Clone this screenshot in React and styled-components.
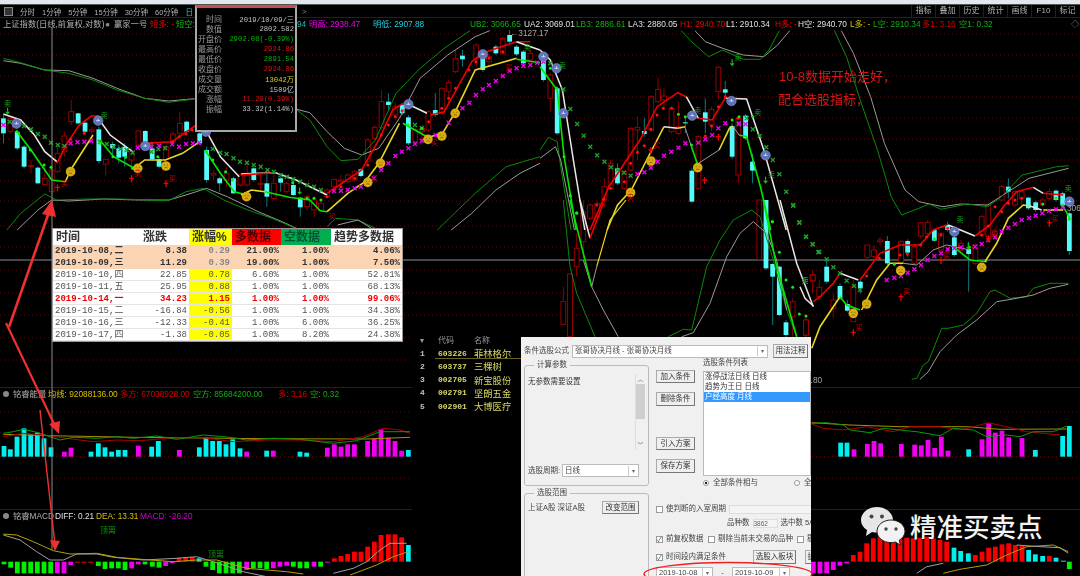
import React from 'react';
import styled, { createGlobalStyle } from 'styled-components';

const GlobalStyle = createGlobalStyle`
  html, body { margin: 0; padding: 0; background: #000; }
  body { font-family: "Liberation Sans", "Noto Sans CJK SC", sans-serif; }
`;

const CJK = `"Liberation Sans", "Noto Sans CJK SC", sans-serif`;
const MONO = `"Liberation Mono", "Noto Sans CJK SC", monospace`;

// zoom frames: the points below were read off crops of the chart
const Z1 = { ox: 0, oy: 0, sx: 2.904 };
const Z2 = { ox: 540, oy: 0, sx: 2.904 };
const Z5 = { ox: 0, oy: 380, sx: 3 };
const Z6 = { ox: 800, oy: 230, sx: 3 };
const Z8 = { ox: 520, oy: 200, sx: 3 };
const Z9 = { ox: 800, oy: 150, sx: 3 };

const at = (z, x, y) => [z.ox + x / z.sx, z.oy + y / 3];
const coords = (z, s) => s.trim().split(/\s+/).map(p => {
  const [x, y] = p.split(',').map(Number);
  return at(z, x, y);
});
const poly = (z, s) => coords(z, s).map(p => p.map(n => n.toFixed(1)).join(',')).join(' ');

const WHITE = '#e8e8e8', GRAY = '#9a9a9a', DGREEN = '#0a8a0a', RED = '#f00000', LIME = '#00e800', YEL = '#e8d820';

const LINES = [
  [Z1, GRAY, 1, '10,182 60,190 130,210 200,212 270,235 340,265 420,295 490,303 565,296'],
  [Z1, DGREEN, 1, '10,175 60,188 130,210 200,220 270,240 340,270 420,295 490,307 565,297'],
  [Z1, GRAY, 1, '862,328 900,338 950,395 1000,445 1050,465 1100,445 1160,355 1220,235 1300,165 1380,110 1422,92'],
  [Z1, DGREEN, 1, '862,330 900,360 950,440 990,482 1040,478 1090,420 1150,280 1220,205 1290,145 1365,92'],
  [Z2, GRAY, 1, '450,92 480,125 530,145 590,165 650,170 690,135 725,92'],
  [Z2, DGREEN, 1, '410,92 440,125 490,170 530,150 590,178 640,178 665,150 695,92'],
  [Z2, GRAY, 1, '875,92 910,160 960,290 1000,430 1060,570 1100,605 1170,620 1220,612 1300,615 1360,575 1420,535 1535,505'],
  [Z2, DGREEN, 1, '855,92 890,170 930,300 980,450 1020,590 1050,645 1100,625 1130,612 1165,628 1240,612 1300,620 1340,590 1400,525 1500,500 1535,497'],
  [Z1, GRAY, 1, '50,690 110,630 150,600 200,603 300,597 400,600 490,600 540,585 600,565 660,590 750,635 830,670 870,690'],
  [Z1, DGREEN, 1, '20,690 60,640 130,582 165,600 250,597 350,597 490,602 540,575 590,565 650,600 720,630 790,655 870,690'],
  [Z1, DGREEN, 1, '950,680 975,655 1040,660 1090,685'],
  [Z1, GRAY, 1, '980,675 1040,660 1090,692'],
  [Z1, DGREEN, 1, '1270,690 1320,640 1380,580 1470,500 1568,470'],
  [Z1, GRAY, 1, '1310,690 1370,640 1440,570 1510,520 1568,490'],
  [Z2, DGREEN, 1, '0,450 25,412 50,425 60,500 90,690'],
  [Z2, GRAY, 1, '0,475 45,440 60,480 100,690'],
  [Z8, DGREEN, 1, '130,0 150,200 170,280 225,410'],
  [Z8, GRAY, 1, '190,180 215,260 250,330 295,410'],
  [Z8, DGREEN, 1, '445,410 490,388 515,390 560,200 600,120 640,60 695,30 720,50 760,180 800,330 830,410'],
  [Z8, GRAY, 1, '485,410 520,398 570,310 620,170 660,100 700,65 740,100 770,180 800,330'],
  [Z6, DGREEN, 1, '335,448 350,445 370,405 385,395 425,295 445,295 490,285 530,250 570,185 585,180 630,205 680,200 700,175 750,160 805,160'],
  [Z6, GRAY, 1, '360,448 385,425 420,365 470,315 530,270 590,215 650,205 700,195 750,175 805,163'],
  // channel, left half
  [Z1, WHITE, 1.5, '10,342 60,360 100,405 130,455 165,485'],
  [Z1, LIME, 1.6, '50,395 90,450 130,510 150,540 190,545'],
  [Z1, RED, 1.6, '165,490 195,430 230,375 265,348 285,348'],
  [Z1, YEL, 1.6, '190,545 205,510 270,405'],
  [Z1, WHITE, 1.5, '285,355 320,405 385,455'],
  [Z1, LIME, 1.6, '290,420 330,470 390,505'],
  [Z1, YEL, 1.6, '390,505 420,480 480,480 530,460 580,425'],
  [Z1, RED, 1.6, '420,430 500,425 570,375'],
  [Z1, WHITE, 1.5, '600,395 640,470 695,530'],
  [Z1, WHITE, 1.5, '700,522 800,518 860,540 950,585'],
  [Z1, RED, 1.6, '700,525 800,518'],
  [Z1, LIME, 1.6, '595,450 640,520 680,575 720,585'],
  [Z1, YEL, 1.6, '700,585 730,570 770,575'],
  [Z1, LIME, 1.6, '770,575 840,592 900,600 930,632 950,635'],
  [Z1, YEL, 1.6, '950,635 1010,580 1060,545 1100,490 1160,370'],
  [Z1, LIME, 1.6, '1170,370 1240,410'],
  [Z1, WHITE, 1.5, '1190,315 1240,340'],
  [Z1, RED, 1.6, '950,580 1050,510 1100,420 1140,330 1170,310'],
  [Z1, RED, 1.6, '1250,345 1290,335 1330,260 1370,185 1400,160'],
  [Z1, YEL, 1.6, '1250,410 1285,400 1320,340 1380,210 1450,190 1500,175'],
  [Z1, RED, 1.6, '1400,160 1500,125 1540,125'],
  [Z1, WHITE, 1.5, '1500,125 1568,150'],
  [Z1, LIME, 1.6, '1500,178 1568,188'],
  // channel, middle
  [Z2, WHITE, 1.5, '0,150 30,180 65,270 100,500 130,690'],
  [Z2, LIME, 1.6, '0,200 50,270 70,470 105,690'],
  [Z8, WHITE, 1.5, '180,0 210,115'],
  [Z8, LIME, 1.6, '150,0 215,260'],
  [Z8, RED, 1.6, '210,115 250,10'],
  [Z8, YEL, 1.2, '318,0 270,60 230,200'],
  [Z8, GRAY, 1, '230,200 215,260'],
  [Z2, RED, 1.6, '145,690 200,560 290,420 340,320 400,278 425,290'],
  [Z2, YEL, 1.6, '195,690 225,615 265,570 310,480 360,380'],
  [Z2, WHITE, 1.5, '360,380 400,385'],
  [Z2, YEL, 1.6, '400,385 422,380'],
  [Z2, WHITE, 1.5, '425,290 460,355'],
  [Z2, GRAY, 1, '422,385 440,440'],
  [Z2, LIME, 1.6, '440,440 460,500'],
  [Z2, RED, 1.6, '460,355 500,360 540,290'],
  [Z2, WHITE, 1.5, '540,295 600,297 650,450 715,690'],
  [Z2, GRAY, 1, '460,490 520,450'],
  [Z2, YEL, 1.6, '520,450 550,385 560,378'],
  [Z2, GRAY, 1, '560,378 578,405'],
  [Z2, LIME, 1.6, '578,405 600,410 640,560 670,690'],
  [Z8, LIME, 1.6, '730,0 770,200 830,410'],
  [Z8, WHITE, 1.5, '780,0 830,190 880,320'],
  // channel, right
  [Z6, WHITE, 1.5, '0,170 15,205 40,228'],
  [Z6, YEL, 1.6, '35,355 60,290 100,230 120,200'],
  [Z6, LIME, 1.6, '120,200 140,225 180,240'],
  [Z6, YEL, 1.6, '185,240 230,150 270,100 310,100'],
  [Z6, GRAY, 1, '310,100 350,105 400,60 440,45 510,60'],
  [Z6, RED, 1.6, '40,215 60,200 100,160 120,130'],
  [Z6, WHITE, 1.5, '120,130 175,150'],
  [Z9, RED, 1.6, '180,390 240,310 300,285 360,285 400,240 440,225'],
  [Z9, WHITE, 1.5, '445,225 525,258'],
  [Z9, RED, 1.6, '525,258 570,225 610,170 650,125 700,112'],
  [Z9, WHITE, 1.5, '700,112 730,130'],
  [Z9, RED, 1.6, '730,130 790,135'],
  [Z9, LIME, 1.6, '460,290 510,330 560,335'],
  [Z9, YEL, 1.6, '555,335 590,280 625,205 670,165 690,168'],
  [Z9, WHITE, 1.5, '690,168 725,180'],
  [Z9, YEL, 1.6, '730,180 790,180'],
  [Z9, LIME, 1.6, '790,170 810,205'],
];

// [x, body top, body bottom, wick top, wick bottom, kind]
const CANDLES = [
  [Z1, [
    [10,355,400,345,430,'c'],[30,355,395,350,400,'r'],[50,395,445,390,450,'c'],[70,440,500,435,505,'c'],
    [90,497,500,480,520,'r'],[110,503,550,500,553,'c'],[130,535,553,500,555,'r'],[150,510,575,500,585,'r'],
    [167,460,515,440,520,'r'],[187,408,455,395,470,'r'],[207,335,365,300,375,'r'],[227,340,370,338,372,'c'],
    [247,368,395,360,400,'c'],[267,390,394,380,410,'r'],[287,388,483,380,490,'c'],[307,478,492,478,525,'r'],
    [327,432,445,425,470,'c'],[345,445,473,435,490,'c'],[362,440,470,430,500,'c'],[382,455,480,440,505,'r'],
    [402,393,435,390,440,'r'],[422,393,425,390,430,'c'],[442,445,478,430,482,'c'],[462,478,500,470,505,'c'],
    [482,440,478,435,500,'r'],[502,402,425,395,430,'r'],[522,370,400,335,410,'r'],[542,365,395,362,398,'c'],
    [580,400,430,395,435,'c'],[600,450,540,440,548,'c'],[620,520,525,510,540,'r'],[638,535,550,530,575,'c'],
    [658,520,540,500,560,'r'],[678,535,580,530,582,'c'],[698,525,555,520,560,'r'],[718,520,555,490,560,'r'],
    [737,505,540,500,545,'c'],[757,550,553,520,570,'r'],[775,550,590,510,620,'c'],[795,550,595,520,600,'r'],
    [815,535,548,530,575,'c'],[832,550,575,545,580,'r'],[852,555,585,540,588,'c'],[872,593,622,590,650,'c'],
    [892,590,620,585,630,'r'],[912,600,630,590,652,'r'],[932,610,630,600,632,'r'],[950,570,590,565,595,'r'],
    [970,538,560,535,565,'r'],[990,540,545,525,560,'r'],[1010,525,545,520,550,'r'],[1030,515,540,510,545,'r'],
    [1048,508,528,505,532,'c'],[1068,420,485,415,490,'r'],[1088,382,415,375,420,'r'],[1108,305,382,270,390,'r'],
    [1128,305,315,280,330,'c'],[1148,320,345,310,360,'r'],[1168,315,340,312,345,'c'],[1186,352,430,345,435,'c'],
    [1206,388,425,385,430,'r'],[1226,385,395,375,420,'r'],[1244,335,390,330,395,'r'],[1264,330,345,280,350,'c'],
    [1283,265,340,262,345,'r'],[1303,248,275,240,310,'r'],[1323,175,215,150,220,'r'],[1343,167,178,150,200,'c'],
    [1383,135,175,130,200,'r'],[1402,175,210,170,215,'c'],[1420,170,185,160,200,'r'],[1440,140,160,135,165,'c'],
    [1460,115,160,110,165,'r'],[1480,105,125,90,130,'c'],[1500,140,163,135,168,'c'],[1520,155,190,150,195,'c'],
    [1540,160,180,150,190,'r'],
  ]],
  [Z2, [
    [10,170,240,165,245,'c'],[30,225,295,220,335,'r'],[50,265,400,260,405,'c'],
    [187,560,600,535,620,'r'],[205,490,565,480,570,'r'],[225,505,550,490,555,'c'],[245,515,565,510,570,'r'],
    [263,385,510,380,515,'r'],[283,382,390,350,480,'r'],[303,393,402,355,410,'c'],[323,290,390,285,395,'r'],
    [343,268,305,232,310,'r'],[360,288,300,265,330,'r'],[382,325,395,320,400,'r'],[402,380,400,305,405,'r'],
    [422,367,370,350,400,'c'],[441,512,605,505,608,'c'],[460,410,565,405,570,'r'],[480,337,365,295,400,'c'],
    [498,328,375,320,395,'r'],[518,202,275,198,300,'r'],[538,268,278,243,290,'c'],[558,378,470,370,475,'c'],
    [576,355,525,350,550,'r'],[597,347,415,342,420,'c'],[617,485,512,460,550,'c'],
  ]],
  [Z8, [
    [130,305,373,260,375,'r'],[150,222,410,220,410,'r'],[170,145,200,100,230,'r'],[190,35,125,0,180,'r'],
    [210,15,55,10,60,'r'],[232,10,50,5,55,'r'],
    [718,0,178,0,180,'r'],[738,0,205,0,210,'c'],[758,192,230,190,375,'c'],[778,200,345,198,348,'c'],
    [798,367,405,360,410,'c'],[818,305,350,295,410,'r'],[858,360,405,355,410,'r'],[878,225,243,210,275,'r'],
  ]],
  [Z6, [
    [18,270,315,258,325,'r'],[38,135,152,120,190,'r'],[58,172,200,150,210,'r'],[80,110,155,90,160,'c'],
    [100,210,235,190,265,'r'],[120,168,205,160,210,'c'],[142,222,242,210,245,'c'],[160,170,275,150,275,'r'],
    [181,155,175,150,190,'c'],[202,45,82,45,90,'r'],[222,60,80,45,90,'r'],[240,30,35,20,45,'r'],
    [262,33,100,18,105,'c'],[303,35,100,30,110,'r'],[323,33,68,28,80,'c'],[343,50,100,40,105,'r'],
    [506,57,72,35,185,'c'],[526,45,100,40,105,'r'],
  ]],
  [Z9, [
    [362,218,258,215,265,'r'],[383,218,250,210,255,'r'],[403,240,272,235,275,'c'],[423,250,300,245,305,'r'],
    [443,225,240,215,245,'c'],[463,262,315,258,320,'c'],[483,280,300,270,305,'r'],[545,200,255,195,260,'r'],
    [565,165,260,160,265,'r'],[585,245,255,235,260,'r'],[605,110,150,105,155,'r'],[625,110,125,85,145,'c'],
    [645,125,165,120,170,'r'],[665,125,145,120,170,'r'],[685,143,175,140,180,'c'],[707,157,180,152,185,'c'],
    [728,150,165,145,170,'r'],[748,125,145,115,150,'r'],[768,122,150,118,155,'c'],[788,130,165,125,170,'c'],
    [808,190,303,185,315,'c'],
  ]],
];

const MAGENTA_X = [
  [Z1, '10,375 205,430 225,427 245,425 265,423 400,443 440,440 462,437 500,433 520,440 540,432 560,430 578,428 970,573 990,572 1010,570 1030,565 1048,560 1085,535 1107,510 1128,490 1148,468 1167,455 1186,445 1205,432 1225,422 1265,405 1303,368 1323,345 1343,325 1363,308 1382,285 1402,268 1420,255 1440,243 1460,228 1480,212 1500,205 1520,198 1540,195 1560,188'],
  [Z2, '10,185 283,522 303,517 322,503 342,485 360,467 381,455 402,443 422,430 460,428 480,418 500,405 518,385 538,370 578,370 597,373'],
  [Z9, '260,390 283,383 303,378 323,368 343,358 363,345 383,330 403,318 423,310 443,298 463,295 483,292 525,290 545,282 565,270 585,262 605,245 625,233 645,222 665,210 687,204 707,197 727,190 747,183 768,178 788,172'],
];
const GREEN_X = [
  [Z1, '28,365 70,378 90,388 110,402 130,410 148,428 168,435 187,438 290,425 310,432 330,440 350,447 368,450 385,458 440,455 460,447 480,445 618,447 640,458 658,462 678,475 697,485 717,488 737,495 757,500 777,510 795,515 815,525 833,530 852,537 872,545 892,555 912,560 932,570 1205,375 1225,385'],
  [Z2, '30,190 68,268 88,327 108,372 127,407 146,440 166,466 187,485 206,502 225,510 244,518 263,527 577,373 600,355 618,388 638,408 657,442 676,480 695,523 715,575 735,617 753,667'],
  [Z8, '820,15 838,68 858,110 878,133 895,157'],
  [Z6, '18,20 38,43 58,65 80,88 100,112 120,130 140,152 162,168 180,180'],
];
const RED_DOTS = [
  [Z1, '205,418 245,400 440,430 500,425 520,410 540,402 558,390 950,590 990,560 1030,535 1068,495 1107,405 1128,375 1148,350 1168,332 1245,365 1283,325 1303,295 1323,265 1362,210 1382,185 1420,175 1460,155'],
  [Z2, '185,598 165,615 205,565 245,545 263,490 283,457 303,437 322,388 340,345 358,325 382,325 480,408 498,378 518,320 538,290 575,355'],
  [Z9, '200,378 238,325 300,315 322,312 362,285 380,260 423,255 443,235 545,255 565,228 585,170 605,185 625,160 645,150 665,145'],
];
const GREEN_DOTS = [
  [Z1, '48,395 88,450 128,495 148,502 290,430 328,470 365,472 385,505 458,470 600,455 618,480 655,515 675,540 850,548 892,595 912,595 932,600 1185,375 1225,385'],
  [Z2, '30,205 48,265 70,470 88,587 107,640 402,343 422,350 440,435 558,360 578,350 618,350 675,665'],
  [Z8, '170,38 757,65 778,157 798,240 818,262 838,342 858,348'],
  [Z9, '283,343 403,267 508,292 728,162 768,145 788,165 808,208'],
];
const COINS = [
  [Z1, '48,371 285,362 422,438 598,395 1186,313 1402,163'],
  [Z2, '10,170 48,205 68,340 442,347 556,303 655,466'],
  [Z9, '463,245 808,155'],
];
const FACES = [
  [Z1, '205,515 400,505 482,498 716,590 1068,547 1105,490 1243,418 1283,408 1322,340'],
  [Z2, '322,483 263,578 458,503'],
  [Z6, '160,250 200,222 302,122 545,112'],
];
const BUY_TEXT = [
  [Z1, '187,550 400,520 500,535 965,648 1088,533 1262,425 1478,200'],
  [Z2, '262,590 340,435'],
  [Z6, '178,290 320,183'],
  [Z9, '440,315 582,250 765,203'],
];
const BUY_ARROWS = [
  [Z1, '167,562 382,535 482,550'],
  [Z2, '322,450 478,540 518,410'],
  [Z6, '160,307 303,200'],
  [Z9, '423,330 565,265 748,218'],
];
const SELL_TEXT = [
  [Z1, '22,310 302,345 1532,140'],
  [Z2, '65,195 575,172 458,330 632,335 672,523'],
  [Z9, '15,390 480,207 805,115'],
  [Z8, '855,240'],
];
const SELL_ARROWS = [
  [Z1, '22,335 870,575'],
  [Z2, '558,190 655,542'],
  [Z9, '505,290'],
];

const all = list => list.flatMap(([z, s]) => coords(z, s));

const GRID_Y = [34, 55, 76, 97, 118, 139, 160, 181, 201, 226, 247, 270, 293, 315, 338, 360];

const Candle = ({ z, d }) => {
  const [x, t, b, wt, wb, kind] = d;
  const [cx, top] = at(z, x, t);
  const [, bottom] = at(z, x, b);
  const [, wickTop] = at(z, x, wt);
  const [, wickBottom] = at(z, x, wb);
  const cyan = kind === 'c';
  return (
    <g>
      <line x1={cx} x2={cx} y1={wickTop} y2={wickBottom} stroke={cyan ? '#0a7a80' : '#8a0000'} strokeWidth="1" />
      <rect x={cx - 2.4} y={top} width="4.8" height={Math.max(bottom - top, 1)}
        fill={cyan ? '#55fbfb' : '#000'} stroke={cyan ? '#55fbfb' : '#a80000'} strokeWidth={cyan ? 0 : 0.9} />
    </g>
  );
};

const Cross = ({ p, color }) => (
  <path d={`M${p[0] - 2} ${p[1] - 2}L${p[0] + 2} ${p[1] + 2}M${p[0] + 2} ${p[1] - 2}L${p[0] - 2} ${p[1] + 2}`}
    stroke={color} strokeWidth="1.3" fill="none" />
);

const Coin = ({ p }) => (
  <g>
    <circle cx={p[0]} cy={p[1]} r="4.8" fill="#5f74b8" stroke="#8b9bd0" strokeWidth=".5" />
    <path d={`M${p[0] - 2} ${p[1]}H${p[0] + 2}M${p[0]} ${p[1] - 2}V${p[1] + .6}`} stroke="#dfe6ff" strokeWidth=".8" />
  </g>
);

const Face = ({ p }) => (
  <g>
    <circle cx={p[0]} cy={p[1]} r="4.8" fill="#d8ad12" />
    <path d={`M${p[0] - 2} ${p[1] - 1}h1M${p[0] + 1} ${p[1] - 1}h1M${p[0] - 1.6} ${p[1] + 2}q1.6 -1.4 3.2 0`}
      stroke="#6b4a00" strokeWidth=".7" fill="none" />
  </g>
);

const BuyArrow = ({ p }) => (
  <g stroke="#f00000" fill="none" strokeWidth="1.3">
    <path d={`M${p[0]} ${p[1] - 3}V${p[1] + 4}M${p[0] - 2.4} ${p[1]}H${p[0] + 2.4}`} />
  </g>
);

const SellArrow = ({ p }) => (
  <g>
    <path d={`M${p[0]} ${p[1] - 4}V${p[1]}`} stroke="#16c016" strokeWidth="1.2" />
    <path d={`M${p[0] - 2.5} ${p[1]}H${p[0] + 2.5}L${p[0]} ${p[1] + 3}Z`} fill="#16c016" />
  </g>
);

const MainChart = () => (
  <ChartSvg viewBox="0 30 1080 357" $h={357}>
    {GRID_Y.map(y => <line key={y} x1="0" x2="1080" y1={y} y2={y} stroke="#6a0000" strokeWidth="1" strokeDasharray="1 3" />)}
    <line x1="0" x2="1080" y1="260" y2="260" stroke="#8c8c8c" strokeWidth="1" />
    {CANDLES.flatMap(([z, list], i) => list.map((d, j) => <Candle key={`${i}-${j}`} z={z} d={d} />))}
    {LINES.map(([z, color, width, s], i) => <polyline key={i} points={poly(z, s)} fill="none" stroke={color} strokeWidth={width} />)}
    {all(GREEN_X).map((p, i) => <Cross key={i} p={p} color="#1f9f2a" />)}
    {all(MAGENTA_X).map((p, i) => <Cross key={i} p={p} color="#f000f0" />)}
    {all(RED_DOTS).map((p, i) => <circle key={i} cx={p[0]} cy={p[1]} r="1.5" fill="#ff1010" />)}
    {all(GREEN_DOTS).map((p, i) => <circle key={i} cx={p[0]} cy={p[1]} r="1.5" fill="#10f010" />)}
    {all(COINS).map((p, i) => <Coin key={i} p={p} />)}
    {all(FACES).map((p, i) => <Face key={i} p={p} />)}
    {all(BUY_ARROWS).map((p, i) => <BuyArrow key={i} p={p} />)}
    {all(SELL_ARROWS).map((p, i) => <SellArrow key={i} p={p} />)}
    {all(BUY_TEXT).map((p, i) => <MarkText key={i} x={p[0]} y={p[1] + 3} $c="#c80000">买</MarkText>)}
    {all(SELL_TEXT).map((p, i) => <MarkText key={i} x={p[0]} y={p[1] + 3} $c="#1aa01a">卖</MarkText>)}
    <PriceText x="510" y="36">←3127.17</PriceText>
    <PriceText x="1067" y="211">306</PriceText>
    <PriceText x="806" y="383">6.80</PriceText>
    <NoteText x="779" y="81">10-8数据开始走好，</NoteText>
    <NoteText x="778" y="104">配合选股指标，</NoteText>
  </ChartSvg>
);

const ENERGY_LEFT = '12:32:c 31:22:c 51:60:c 72:85:c 92:67:c 112:72:c 132:55:c 153:28:c 193:15:m 213:27:m 273:15:c 295:40:c 315:28:c 335:15:c 355:20:c 375:20:c 415:33:m 455:30:c 475:47:c 538:20:m 598:28:c 618:57:c 638:47:c 658:47:c 678:37:c 698:52:c 720:25:c 740:15:m 800:18:c 820:18:m 900:15:c 920:12:c 982:27:m 1003:37:m 1023:30:m 1043:37:m 1063:37:m 1103:47:m 1123:55:m 1143:82:m 1165:57:m 1185:47:m 1205:18:m 1225:20:c';
const ENERGY_RIGHT = '122:42:c 141:42:c 162:22:m 202:38:m 222:47:m 242:40:m 304:38:m 344:36:m 364:34:m 384:50:m 404:26:m 424:60:m 444:18:m 506:22:c 546:52:m 566:100:m 586:72:m 606:78:m 626:58:m 666:56:m 706:20:c 788:62:c 808:92:c';
const MACD_LEFT = '12:-8:g 32:-18:g 52:-35:g 72:-35:g 92:-35:g 112:-35:g 132:-35:g 152:-35:g 172:-35:m 192:-35:m 212:-10:m 232:-3:r 252:-3:r 272:-3:r 295:-13:g 315:-22:g 335:-20:g 355:-20:g 375:-25:g 395:-20:m 415:-8:m 435:-8:g 457:-15:g 477:-18:g 497:-13:m 517:-4:m 537:12:r 557:14:r 577:14:r 597:10:c 618:-15:g 638:-25:g 658:-35:g 678:-35:g 698:-35:g 718:-35:g 740:-25:m 760:-20:g 780:-20:g 800:-22:g 820:-20:m 840:-15:m 860:-12:m 880:-15:g 900:-20:g 920:-20:g 942:-15:m 962:-15:g 982:-3:m 1003:10:r 1023:17:r 1043:23:r 1063:30:r 1083:30:r 1103:45:r 1123:60:r 1143:80:r 1165:82:r 1185:82:r 1205:73:r 1225:50:c';
const MACD_RIGHT = '40:-35:m 60:-35:m 80:-35:m 100:-25:m 120:-12:m 140:-5:m 160:20:r 180:30:r 200:55:r 220:70:r 240:75:r 260:75:r 280:70:r 300:70:r 320:72:r 340:70:r 360:72:r 380:75:r 400:70:r 420:65:r 440:60:r 462:42:c 482:32:c 505:25:c 526:20:r 546:30:r 566:42:r 586:45:r 606:52:r 626:55:r 646:50:r 666:48:r 686:35:c 706:22:c 728:17:c 748:17:r 768:12:c 790:3:c 808:-22:g';

const BAR_COLORS = { c: '#00f0f0', m: '#f000f0', g: '#00f000', r: '#f80000' };

const Bars = ({ z, base, data, width = 4.8 }) => data.split(' ').map(item => {
  const [x, h, c] = item.split(':');
  const [left, y0] = at(z, Number(x), base);
  const hpx = Number(h) / 3;
  return <rect key={x} x={left - width / 2} width={width} y={hpx > 0 ? y0 - hpx : y0} height={Math.abs(hpx)} fill={BAR_COLORS[c]} />;
});

const EnergyChart = () => (
  <ChartSvg viewBox="0 399 1080 110" $h={110}>
    {[411.7, 456.7, 478].map(y => <line key={y} x1="0" x2="1080" y1={y} y2={y} stroke="#6a0000" strokeDasharray="1 3" />)}
    <Bars z={Z5} base={230} data={ENERGY_LEFT} />
    <Bars z={Z6} base={680} data={ENERGY_RIGHT} />
    <polyline points={poly(Z5, '10,163 150,167 400,172 800,176 1100,177 1230,172')} fill="none" stroke="#a89000" />
    <polyline points={poly(Z5, '10,170 70,160 130,165 200,175 280,185 350,180 420,182 500,175 600,172 700,185 800,180 900,180 1000,185 1090,170 1150,145 1200,150 1230,160')} fill="none" stroke="#b00000" />
    <polyline points={poly(Z5, '10,160 40,155 70,148 110,157 150,170 180,180 220,172 290,175 350,170 400,175 470,168 530,178 610,165 690,172 740,180 820,175 900,178 1000,190 1070,182 1140,155 1230,155')} fill="none" stroke="#0a9a0a" />
    <polyline points={poly(Z6, '35,578 150,585 300,590 500,590 600,598 800,597')} fill="none" stroke="#a89000" />
    <polyline points={poly(Z6, '35,582 70,595 130,600 200,590 280,605 330,590 420,590 480,600 520,590 565,578 640,595 680,605 780,615')} fill="none" stroke="#b00000" />
    <polyline points={poly(Z6, '35,580 80,578 130,585 150,600 210,608 250,595 320,602 350,605 420,617 460,595 520,600 560,620 620,615 660,620 700,605 760,605 800,588')} fill="none" stroke="#0a9a0a" />
  </ChartSvg>
);

const MacdChart = () => (
  <ChartSvg viewBox="0 521 1080 55" $h={55}>
    <Bars z={Z5} base={545} data={MACD_LEFT} />
    <Bars z={Z6} base={995} data={MACD_RIGHT} />
    <polyline points={poly(Z5, '10,465 60,480 110,515 150,540 190,540 230,522 290,522 340,532 430,540 530,535 590,530 640,545 730,575 800,590')} fill="none" stroke="#a0a0a0" />
    <polyline points={poly(Z5, '10,462 50,465 100,485 160,512 210,522 290,520 350,532 450,540 520,545 590,540 650,540 740,565 860,575 910,582')} fill="none" stroke="#b8a000" />
    <polyline points={poly(Z5, '1000,580 1060,565 1100,545 1140,510 1170,490 1220,490')} fill="none" stroke="#a0a0a0" />
    <polyline points={poly(Z5, '1050,585 1130,555 1180,530 1225,515')} fill="none" stroke="#b8a000" />
    <polyline points={poly(Z6, '350,1030 380,1010 430,1000')} fill="none" stroke="#a0a0a0" />
    <polyline points={poly(Z6, '430,1030 480,1018 560,1005 620,975 680,950 760,945 805,965')} fill="none" stroke="#b8a000" />
    <polyline points={poly(Z6, '650,945 720,950 780,953 805,970')} fill="none" stroke="#a0a0a0" />
    <MarkText x="108" y="533" $c="#0a9a0a" $s={8}>顶离</MarkText>
    <MarkText x="216" y="557" $c="#0a9a0a" $s={8}>顶离</MarkText>
  </ChartSvg>
);

const Annotations = () => (
  <AnnotationSvg viewBox="0 0 1080 576">
    <line x1="52" x2="52" y1="27" y2="550" stroke="#8c8c8c" strokeWidth="1" />
    <g stroke="#f03030" fill="#f03030">
      <line x1="9" y1="327" x2="49" y2="212" strokeWidth="2.6" />
      <polygon points="52,200 42,214 56,217" strokeWidth="0" />
      <line x1="6" y1="323" x2="56" y2="428" strokeWidth="2.2" />
      <polygon points="59,434 49,424 60,421" strokeWidth="0" />
      <line x1="40" y1="410" x2="55" y2="545" strokeWidth="1.4" />
      <polygon points="55,551 50,540 60,541" strokeWidth="0" />
    </g>
  </AnnotationSvg>
);

const TABS = ['分时', '1分钟', '5分钟', '15分钟', '30分钟', '60分钟', '日'];
const TOOLS = ['指标', '叠加', '历史', '统计', '画线', 'F10', '标记'];

const QUOTES = [
  ['上证指数(日线,前复权,对数)', '#b0b0b0', 102],
  ['●', '#888', 9],
  ['赢家一号', '#b0b0b0', 36],
  ['短多: -', '#f00000', 26],
  ['短空: -', '#10c010', 121],
  ['94', '#20b0b0', 12],
  ['明高: 2938.47', '#f000f0', 64],
  ['明低: 2907.88', '#20d0e0', 97],
  ['UB2: 3066.65', '#10b010', 54],
  ['UA2: 3069.01', '#e0e0e0', 52],
  ['LB3: 2886.61', '#10b010', 52],
  ['LA3: 2880.05', '#e0e0e0', 52],
  ['H1: 2940.70', '#f00000', 46],
  ['L1: 2910.34', '#e0e0e0', 49],
  ['H多: -', '#f00000', 23],
  ['H空: 2940.70', '#e0e0e0', 52],
  ['L多: -', '#d8c000', 23],
  ['L空: 2910.34', '#10b010', 49],
  ['多1: 3.16', '#d80000', 37],
  ['空1: 0.32', '#10b010', 112],
  ['◇', '#888', 8],
];

const POPUP_ROWS = [
  ['时间', '2019/10/09/三', '#c0c0c0'],
  ['数值', '2802.582', '#c0c0c0'],
  ['开盘价', '2902.08(-0.39%)', '#0ab00a'],
  ['最高价', '2924.86', '#e01010'],
  ['最低价', '2891.54', '#0ab00a'],
  ['收盘价', '2924.86', '#e01010'],
  ['成交量', '13042万', '#d8d020'],
  ['成交额', '1509亿', '#c0c0c0'],
  ['涨幅', '11.29(0.39%)', '#e01010'],
  ['振幅', '33.32(1.14%)', '#c0c0c0'],
];

const TABLE_HEAD = [['时间', '#fff', '#333'], ['涨跌', '#fff', '#333'], ['涨幅%', '#ffff00', '#333'], ['多数据', '#ff0000', '#400'], ['空数据', '#00b050', '#053'], ['趋势多数据', '#fff', '#333']];
const TABLE_ROWS = [
  ['2019-10-08,二', '8.38', '0.29', '21.00%', '1.00%', '4.06%', 'hot'],
  ['2019-10-09,三', '11.29', '0.39', '19.00%', '1.00%', '7.50%', 'hot'],
  ['2019-10-10,四', '22.85', '0.78', '6.60%', '1.00%', '52.81%'],
  ['2019-10-11,五', '25.95', '0.88', '1.00%', '1.00%', '68.13%'],
  ['2019-10-14,一', '34.23', '1.15', '1.00%', '1.00%', '99.06%', 'peak'],
  ['2019-10-15,二', '-16.84', '-0.56', '1.00%', '1.00%', '34.38%'],
  ['2019-10-16,三', '-12.33', '-0.41', '1.00%', '6.00%', '36.25%'],
  ['2019-10-17,四', '-1.38', '-0.05', '1.00%', '8.20%', '24.38%'],
];

const STOCKS = [
  ['1', '603226', '菲林格尔'],
  ['2', '603737', '三棵树'],
  ['3', '002705', '新宝股份'],
  ['4', '002791', '坚朗五金'],
  ['5', '002901', '大博医疗'],
];

export default function App() {
  return (
    <>
      <GlobalStyle />
      <Page>
        <Screen>
          <TopStrip />
          <Toolbar>
            <TabIcon />
            {TABS.map(t => <Tab key={t}>{t}</Tab>)}
            <TabMore>&gt;</TabMore>
            <Tools>{TOOLS.map(t => <Tool key={t}>{t}</Tool>)}</Tools>
          </Toolbar>
          <QuoteRow>
            {QUOTES.map(([t, c, w]) => <Quote key={t} $c={c} $w={w}>{t}</Quote>)}
          </QuoteRow>
          <MainPanel><MainChart /></MainPanel>
          <SubPanel $h={122}>
            <SubHeader>
              <Dot />
              <Quote $c="#b0b0b0" $w={35}>铭睿能量</Quote>
              <Quote $c="#d8c000" $w={72}>均线: 92088136.00</Quote>
              <Quote $c="#d80000" $w={73}>多方: 67038928.00</Quote>
              <Quote $c="#10b010" $w={85}>空方: 85684200.00</Quote>
              <Quote $c="#d80000" $w={32}>多: 3.16</Quote>
              <Quote $c="#10b010" $w={40}>空: 0.32</Quote>
            </SubHeader>
            <EnergyChart />
          </SubPanel>
          <SubPanel $h={67} $last>
            <SubHeader>
              <Dot />
              <Quote $c="#b0b0b0" $w={42}>铭睿MACD</Quote>
              <Quote $c="#e0e0e0" $w={41}>DIFF: 0.21</Quote>
              <Quote $c="#d8c000" $w={44}>DEA: 13.31</Quote>
              <Quote $c="#d000d0" $w={60}>MACD: -26.20</Quote>
            </SubHeader>
            <MacdChart />
          </SubPanel>

          <Annotations />

          <Popup>
            {POPUP_ROWS.map(([label, value, c]) => (
              <PopupRow key={label}>
                <PopupLabel>{label}</PopupLabel>
                <PopupValue $c={c}>{value}</PopupValue>
              </PopupRow>
            ))}
          </Popup>

          <DataTable>
            <TableRow>
              {TABLE_HEAD.map(([t, bg, c]) => <HeadCell key={t} $bg={bg} $c={c}>{t}</HeadCell>)}
            </TableRow>
            {TABLE_ROWS.map(row => (
              <TableRow key={row[0]} $kind={row[6]}>
                {row.slice(0, 6).map((v, i) => <Cell key={i} $first={i === 0} $yellow={i === 2 && row[6] !== 'hot'} $dim={i === 2 && row[6] === 'hot'} $kind={row[6]}>{v}</Cell>)}
              </TableRow>
            ))}
          </DataTable>

          <StockList>
            <StockHead><StockArrow>▾</StockArrow><span>代码</span><span>名称</span></StockHead>
            {STOCKS.map(([n, code, name], i) => (
              <StockRow key={n} $active={i === 0}>
                <StockNum>{n}</StockNum>
                <StockCode>{code}</StockCode>
                <StockName>{name}</StockName>
              </StockRow>
            ))}
          </StockList>

          <Dialog>
            <FormulaRow>
              <DLabel>条件选股公式</DLabel>
              <Combo $w={196}><ComboText>张哥协决月线 - 张哥协决月线</ComboText><ComboBtn>▾</ComboBtn></Combo>
              <DButton $w={35} $h={14} $ml={2}>用法注释</DButton>
            </FormulaRow>
            <DialogBody>
              <LeftColumn>
                <Group $h={126}>
                  <legend>计算参数</legend>
                  <ParamArea>
                    <ParamText>无参数需要设置</ParamText>
                    <ScrollBar><ScrollArrow>︿</ScrollArrow><ScrollThumb /><ScrollArrow>﹀</ScrollArrow></ScrollBar>
                  </ParamArea>
                  <PeriodRow>
                    <DLabel>选股周期:</DLabel>
                    <Combo $w={77}><ComboText>日线</ComboText><ComboBtn>▾</ComboBtn></Combo>
                  </PeriodRow>
                </Group>
                <Group $h={100}>
                  <legend>选股范围</legend>
                  <RangeRow>
                    <DLabel>上证A股 深证A股</DLabel>
                    <DButton $w={37} $h={13}>改变范围</DButton>
                  </RangeRow>
                </Group>
              </LeftColumn>
              <RightColumn>
                <UpperRight>
                  <ButtonStack>
                    <DButton $w={39} $h={13}>加入条件</DButton>
                    <DButton $w={39} $h={14}>删除条件</DButton>
                    <StackGap />
                    <DButton $w={39} $h={13}>引入方案</DButton>
                    <DButton $w={39} $h={14}>保存方案</DButton>
                  </ButtonStack>
                  <CondColumn>
                    <DLabel>选股条件列表</DLabel>
                    <CondList>
                      <CondItem>涨停战法日线 日线</CondItem>
                      <CondItem>趋势为王日 日线</CondItem>
                      <CondItem $selected>户经高度 月线</CondItem>
                    </CondList>
                    <RadioRow>
                      <Radio $on /><DLabel>全部条件相与</DLabel>
                      <RadioGap />
                      <Radio /><DLabel>全部条件相或</DLabel>
                    </RadioRow>
                  </CondColumn>
                </UpperRight>
                <OptionRow $mt={14}>
                  <CheckBox /><DLabel>使判断的入室周期</DLabel>
                  <FieldBox $w={90} />
                </OptionRow>
                <OptionRow $mt={0} $pl={71}>
                  <DLabel>品种数</DLabel><FieldBox $w={25}>3862</FieldBox><DLabel>选中数 5/0</DLabel>
                </OptionRow>
                <OptionRow $mt={2}>
                  <CheckBox $on /><DLabel $w={39}>前复权数据</DLabel>
                  <CheckBox /><DLabel $w={76}>剔除当前未交易的品种</DLabel>
                  <CheckBox /><DLabel>剔除</DLabel>
                </OptionRow>
                <OptionRow $mt={4}>
                  <CheckBox $on /><DLabel $w={84}>时间段内满足条件</DLabel>
                  <DButton $w={43} $h={14}>选股入板块</DButton>
                  <DButton $w={20} $h={14} $ml={6}>执行</DButton>
                </OptionRow>
                <OptionRow $mt={2}>
                  <Combo $w={57}><ComboText>2019-10-08</ComboText><ComboBtn>▾</ComboBtn></Combo>
                  <DLabel $w={13} $center>-</DLabel>
                  <Combo $w={58}><ComboText>2019-10-09</ComboText><ComboBtn>▾</ComboBtn></Combo>
                </OptionRow>
              </RightColumn>
            </DialogBody>
          </Dialog>
          <DateCircle viewBox="0 0 180 40"><ellipse cx="90" cy="20" rx="84" ry="11.5" /></DateCircle>
        </Screen>

        <Watermark>
          <svg width="46" height="42" viewBox="0 0 46 42">
            <path d="M17 2C8 2 1 8 1 15c0 4 2 7.500 6 10l-1 6 6-4c1.500.4 3 .6 5 .6 9 0 16-6 16-12.600S26 2 17 2Z" fill="#e6e6e6" />
            <circle cx="11.500" cy="11.500" r="2" fill="#444" />
            <circle cx="22" cy="11.500" r="2" fill="#444" />
            <path d="M31 15c-7.800 0-14 5-14 11.300S23.200 37.600 31 37.600c1.500 0 3-.2 4.300-.6l5 3-1-4.800c3.300-2 5.700-5.200 5.700-8.900C45 20 38.800 15 31 15Z" fill="#f2f2f2" stroke="#222" strokeWidth="1" />
            <circle cx="26" cy="24" r="1.700" fill="#444" />
            <circle cx="36" cy="24" r="1.700" fill="#444" />
          </svg>
          <WatermarkText>精准买卖点</WatermarkText>
        </Watermark>
      </Page>
    </>
  );
}

const Page = styled.div`
  position: relative;
  width: 1080px;
  height: 576px;
  overflow: hidden;
  background: #000;
`;

const Screen = styled.div`
  position: relative;
  width: 1080px;
  height: 576px;
  overflow: hidden;
  display: flex;
  flex-direction: column;
  background: #000;
  filter: blur(0.4px);
`;

const TopStrip = styled.div`
  height: 4px;
  flex: none;
  background: #e3e8ee;
  border-bottom: 1px solid #555;
`;

const Toolbar = styled.div`
  flex: none;
  height: 12px;
  display: flex;
  align-items: center;
  border-bottom: 1px solid #700000;
  color: #b0b0b0;
  font: 7.500px ${CJK};
`;

const TabIcon = styled.span`
  flex: none;
  width: 7px;
  height: 7px;
  margin: 0 7px 0 4px;
  border: 1px solid #888;
  background: #333;
`;

const Tab = styled.span`
  margin-right: 7px;
  white-space: nowrap;
  &:nth-of-type(8) { color: #20c8d8; }
`;

const TabMore = styled.span`
  margin-left: 102px;
  color: #888;
  font-size: 8px;
`;

const Tools = styled.div`
  margin-left: auto;
  margin-right: 1px;
  display: flex;
  height: 12px;
`;

const Tool = styled.span`
  width: 23px;
  border-left: 1px solid #700000;
  text-align: center;
  font-size: 8px;
  line-height: 12px;
  color: #b0b0b0;
`;

const QuoteRow = styled.div`
  flex: none;
  height: 12px;
  display: flex;
  align-items: center;
  padding-left: 3px;
  overflow: hidden;
`;

const Quote = styled.span`
  flex: 0 0 ${p => p.$w}px;
  width: ${p => p.$w}px;
  color: ${p => p.$c};
  font: 8.300px ${CJK};
  line-height: 12px;
  white-space: nowrap;
`;

const MainPanel = styled.div`
  flex: none;
  height: 357px;
  border-bottom: 1px solid #700000;
`;

const ChartSvg = styled.svg`
  display: block;
  width: 1080px;
  height: ${p => p.$h}px;
  overflow: visible;
`;

const SubPanel = styled.div`
  flex: none;
  height: ${p => p.$h - (p.$last ? 0 : 1)}px;
  ${p => (p.$last ? '' : 'border-bottom: 1px solid #700000;')}
  overflow: hidden;
`;

const SubHeader = styled.div`
  height: 11px;
  display: flex;
  align-items: center;
  padding-left: 3px;
`;

const Dot = styled.span`
  flex: none;
  width: 6px;
  height: 6px;
  margin-right: 4px;
  border-radius: 50%;
  background: #888;
`;

const MarkText = styled.text`
  fill: ${p => p.$c};
  font: ${p => p.$s || 7}px ${CJK};
  text-anchor: middle;
`;

const PriceText = styled.text`
  fill: #a8a8a8;
  font: 8.300px ${CJK};
`;

const NoteText = styled.text`
  fill: #d01818;
  font: 13px ${CJK};
`;

const AnnotationSvg = styled.svg`
  position: absolute;
  inset: 0;
  width: 1080px;
  height: 576px;
  pointer-events: none;
`;

const Popup = styled.div`
  position: absolute;
  left: 195px;
  top: 5px;
  width: 102px;
  height: 127px;
  padding-top: 5px;
  box-sizing: border-box;
  background: #000;
  border: 2px solid #a8a8a8;
  border-top: 3px solid #c85050;
`;

const PopupRow = styled.div`
  display: grid;
  grid-template-columns: 25px 1fr;
  height: 10px;
  align-items: center;
  padding-right: 1px;
  line-height: 10px;
`;

const PopupLabel = styled.span`
  text-align: right;
  color: #9a9a9a;
  font: 8px ${CJK};
  white-space: nowrap;
`;

const PopupValue = styled.span`
  text-align: right;
  color: ${p => p.$c};
  font: 7.200px ${MONO};
  white-space: nowrap;
`;

const DataTable = styled.div`
  position: absolute;
  left: 52px;
  top: 228px;
  width: 351px;
  background: #fff;
  border: 1px solid #9a9a9a;
  box-sizing: border-box;
  display: flex;
  flex-direction: column;
`;

const TableRow = styled.div`
  display: grid;
  grid-template-columns: 87px 49px 43px 49px 50px 1fr;
  background: ${p => (p.$kind === 'hot' ? '#fbd4b4' : '#fff')};
  color: ${p => (p.$kind === 'peak' ? '#f00000' : p.$kind === 'hot' ? '#333' : '#555')};
  font-weight: ${p => (p.$kind ? 700 : 400)};
  &:first-child { height: 16px; }
`;

const HeadCell = styled.div`
  background: ${p => p.$bg};
  color: ${p => p.$c};
  font: 700 12px/16px ${CJK};
  padding-left: 3px;
  white-space: nowrap;
  overflow: hidden;
`;

const Cell = styled.div`
  height: 12px;
  box-sizing: border-box;
  padding: 0 2px;
  text-align: ${p => (p.$first ? 'left' : 'right')};
  background: ${p => (p.$yellow ? '#ffff00' : 'transparent')};
  color: ${p => (p.$dim ? '#888' : 'inherit')};
  font-family: ${MONO};
  font-size: 9px;
  line-height: 12px;
  white-space: nowrap;
  ${p => (p.$kind === 'hot' ? '' : 'border-bottom: 1px solid #e4e4e4;')}
`;

const StockList = styled.div`
  position: absolute;
  left: 412px;
  top: 334px;
  width: 109px;
  height: 242px;
  background: #000;
  padding-top: 1px;
`;

const StockHead = styled.div`
  display: grid;
  grid-template-columns: 26px 36px 1fr;
  height: 11px;
  color: #9a9a9a;
  font: 8px/11px ${CJK};
`;

const StockArrow = styled.span`
  padding-left: 8px;
`;

const StockRow = styled.div`
  display: grid;
  grid-template-columns: 26px 36px 1fr;
  height: 13.300px;
  align-items: center;
  box-sizing: border-box;
  background: ${p => (p.$active ? 'linear-gradient(#6a6420, #6a6420) no-repeat 23px 100% / 86px 1px' : 'none')};
`;

const StockNum = styled.span`
  padding-left: 8px;
  color: #c0c0c0;
  font: 700 8px ${MONO};
`;

const StockCode = styled.span`
  color: #d8d86a;
  font: 700 8px ${MONO};
`;

const StockName = styled.span`
  color: #d8d86a;
  font: 9.300px ${CJK};
  white-space: nowrap;
`;

const Dialog = styled.div`
  position: absolute;
  left: 521px;
  top: 337px;
  width: 290px;
  height: 239px;
  overflow: hidden;
  box-sizing: border-box;
  padding: 7px 0 0 3px;
  background: #f0f0f0;
  color: #333;
  font: 7.500px/10px ${CJK};
  display: flex;
  flex-direction: column;
`;

const FormulaRow = styled.div`
  display: flex;
  align-items: center;
  gap: 3px;
  height: 14px;
  flex: none;
`;

const DLabel = styled.span`
  color: #444;
  white-space: nowrap;
  ${p => (p.$w ? `flex: 0 0 ${p.$w}px;` : '')}
  ${p => (p.$center ? 'text-align: center;' : '')}
`;

const Combo = styled.div`
  flex: 0 0 ${p => p.$w}px;
  width: ${p => p.$w}px;
  height: 13px;
  box-sizing: border-box;
  display: flex;
  align-items: center;
  background: #fff;
  border: 1px solid #bbb;
`;

const ComboText = styled.span`
  flex: 1;
  padding-left: 2px;
  white-space: nowrap;
  overflow: hidden;
  color: #444;
`;

const ComboBtn = styled.span`
  flex: 0 0 9px;
  border-left: 1px solid #ccc;
  text-align: center;
  color: #666;
  font-size: 6px;
`;

const DButton = styled.div`
  flex: none;
  width: ${p => p.$w}px;
  height: ${p => p.$h}px;
  margin-left: ${p => p.$ml || 0}px;
  line-height: ${p => p.$h - 2}px;
  box-sizing: border-box;
  background: #efefef;
  border: 1px solid #aaa;
  border-right-color: #777;
  border-bottom-color: #777;
  text-align: center;
  color: #333;
  white-space: nowrap;
`;

const DialogBody = styled.div`
  flex: 1;
  display: grid;
  grid-template-columns: 125px 1fr;
  column-gap: 7px;
  min-height: 0;
`;

const LeftColumn = styled.div`
  display: flex;
  flex-direction: column;
  gap: 2px;
  padding-top: 2px;
`;

const RightColumn = styled.div`
  display: flex;
  flex-direction: column;
  min-width: 0;
`;

const Group = styled.fieldset`
  flex: none;
  height: ${p => p.$h}px;
  box-sizing: border-box;
  margin: 0;
  padding: 2px 3px;
  border: 1px solid #bbb;
  border-radius: 3px;
  display: flex;
  flex-direction: column;
  & > legend {
    margin-left: 6px;
    padding: 0 3px;
    font-size: 7.500px;
    line-height: 10px;
    color: #444;
  }
`;

const ParamArea = styled.div`
  height: 76px;
  flex: none;
  display: flex;
  justify-content: space-between;
  margin-top: 2px;
`;

const ParamText = styled.span`
  margin-top: 3px;
`;

const ScrollBar = styled.div`
  width: 9px;
  display: flex;
  flex-direction: column;
  align-items: center;
  border-left: 1px solid #ddd;
`;

const ScrollArrow = styled.span`
  font-size: 6px;
  line-height: 10px;
  color: #555;
`;

const ScrollThumb = styled.div`
  flex: 0 0 35px;
  width: 100%;
  margin-bottom: 21px;
  background: #cfcfcf;
`;

const PeriodRow = styled.div`
  display: flex;
  align-items: center;
  gap: 2px;
  margin-top: 14px;
`;

const RangeRow = styled.div`
  display: flex;
  align-items: center;
  gap: 17px;
  margin-top: 1px;
`;

const UpperRight = styled.div`
  display: flex;
  gap: 8px;
  flex: none;
`;

const ButtonStack = styled.div`
  flex: none;
  width: 39px;
  display: flex;
  flex-direction: column;
  gap: 9px;
  padding-top: 12px;
`;

const StackGap = styled.div`
  height: 13px;
`;

const CondColumn = styled.div`
  flex: 1;
  min-width: 0;
`;

const CondList = styled.div`
  height: 105px;
  margin-top: 3px;
  background: #fff;
  border: 1px solid #bbb;
  box-sizing: border-box;
`;

const CondItem = styled.div`
  height: 10px;
  padding-left: 1px;
  line-height: 10px;
  white-space: nowrap;
  background: ${p => (p.$selected ? '#3399ff' : 'transparent')};
  color: ${p => (p.$selected ? '#fff' : '#333')};
`;

const RadioRow = styled.div`
  display: flex;
  align-items: center;
  gap: 4px;
  margin-top: 2px;
  white-space: nowrap;
`;

const Radio = styled.span`
  flex: none;
  width: 6px;
  height: 6px;
  border-radius: 50%;
  background: ${p => (p.$on ? 'radial-gradient(#222 40%, #fff 45%)' : '#fff')};
  border: 1px solid #999;
  box-sizing: border-box;
`;

const RadioGap = styled.span`
  flex: 0 0 28px;
`;

const OptionRow = styled.div`
  flex: none;
  display: flex;
  align-items: center;
  gap: 3px;
  height: 14px;
  margin-top: ${p => p.$mt}px;
  padding-left: ${p => p.$pl || 0}px;
  white-space: nowrap;
`;

const CheckBox = styled.span`
  flex: none;
  width: 7px;
  height: 7px;
  box-sizing: border-box;
  background: #fff;
  border: 1px solid #999;
  color: #1a8a1a;
  font-size: 7px;
  line-height: 6px;
  &::after { content: '${p => (p.$on ? '✓' : '')}'; }
`;

const FieldBox = styled.span`
  flex: 0 0 ${p => p.$w}px;
  width: ${p => p.$w}px;
  height: 9px;
  line-height: 8px;
  background: #f4f4f4;
  border: 1px solid #ddd;
  box-sizing: border-box;
  color: #666;
  font-size: 6.500px;
`;

const DateCircle = styled.svg`
  position: absolute;
  left: 638px;
  top: 554px;
  width: 180px;
  height: 40px;
  fill: none;
  stroke: #f02020;
  stroke-width: 1.4;
`;

const Watermark = styled.div`
  position: absolute;
  left: 860px;
  top: 505px;
  display: flex;
  align-items: center;
  gap: 4px;
`;

const WatermarkText = styled.span`
  color: #f2f2f2;
  font: 500 26.500px/1 "Noto Sans CJK SC", sans-serif;
  white-space: nowrap;
  text-shadow: 0 0 1px #000;
`;
